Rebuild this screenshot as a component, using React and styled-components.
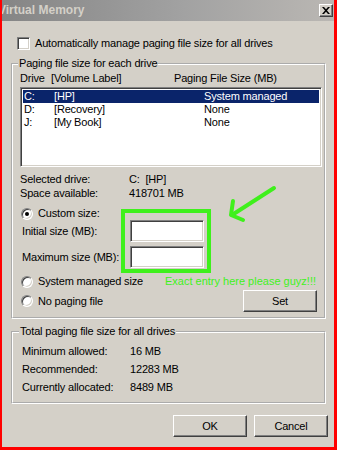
import React from "react";
import styled, { createGlobalStyle } from "styled-components";

const FACE = "#d4d0c8";
const ANNOT = "#3ff01c";

const GlobalStyle = createGlobalStyle`
  html, body {
    margin: 0;
    padding: 0;
    background: #ff0000;
  }
  body {
    font-family: "Liberation Sans", Arial, sans-serif;
    font-size: 11px;
    line-height: 13px;
    letter-spacing: -0.17px;
    color: #000;
  }
`;

const Page = styled.div`
  position: relative;
  width: 337px;
  height: 450px;
  box-sizing: border-box;
  padding: 0 3px 3px 2px;
  background: #ff0000;
  overflow: hidden;
`;

const Window = styled.div`
  height: 100%;
  background: ${FACE};
  display: flex;
  flex-direction: column;
`;

const TitleBar = styled.div`
  height: 21px;
  flex: none;
  display: flex;
  align-items: center;
  justify-content: space-between;
  background: linear-gradient(90deg, #858585 0%, #a2a2a2 55%, #bab7b3 100%);
  overflow: hidden;
`;

const Title = styled.span`
  margin-left: -4px;
  font-size: 12px;
  font-weight: bold;
  letter-spacing: 0;
  color: ${FACE};
  white-space: nowrap;
`;

const CloseButton = styled.div`
  width: 14px;
  height: 13px;
  margin-right: 1px;
  box-sizing: border-box;
  background: ${FACE};
  border: 1px solid;
  border-color: #fff #404040 #404040 #fff;
  box-shadow: inset -1px -1px #808080;
  display: flex;
  align-items: center;
  justify-content: center;
`;

const Body = styled.div`
  flex: 1;
  display: flex;
  flex-direction: column;
  padding: 16px 6px 0 9px;
`;

const CheckRow = styled.label`
  display: flex;
  align-items: center;
  gap: 5px;
  height: 13px;
  padding-left: 6px;
`;

const Sunken = `
  box-sizing: border-box;
  background: #fff;
  border: 1px solid;
  border-color: #808080 #fff #fff #808080;
  box-shadow: inset 1px 1px #404040, inset -1px -1px ${FACE};
`;

const CheckBox = styled.span`
  ${Sunken}
  width: 13px;
  height: 13px;
  flex: none;
`;

const GroupBox = styled.fieldset`
  margin: ${(p) => p.$top}px 2px 0 0;
  padding: 0 2px ${(p) => p.$bottom}px 7px;
  border: 2px groove #fff;
  min-width: 0;
`;

const Legend = styled.legend`
  margin-left: ${(p) => p.$indent}px;
  padding: 0 1px;
  line-height: 13px;
`;

const ListHeader = styled.div`
  display: grid;
  grid-template-columns: 31px 123px auto;
  margin-top: 2px;
  height: 13px;
`;

const DriveList = styled.div`
  ${Sunken}
  margin-top: 2px;
  height: 80px;
  padding: 2px 2px;
`;

const DriveRow = styled.div`
  display: grid;
  grid-template-columns: 30px 150px auto;
  height: 13px;
  padding-left: 1px;
  background: ${(p) => (p.$selected ? "#0a246a" : "transparent")};
  color: ${(p) => (p.$selected ? "#fff" : "#000")};
`;

const InfoGrid = styled.div`
  display: grid;
  grid-template-columns: ${(p) => p.$label}px auto;
  grid-auto-rows: ${(p) => p.$row}px;
  align-items: center;
  margin-top: ${(p) => p.$top}px;
  padding-left: ${(p) => p.$indent}px;
`;

const RadioRow = styled.div`
  display: flex;
  align-items: center;
  gap: 5px;
  height: ${(p) => p.$height || 13}px;
  margin-top: ${(p) => p.$top}px;
  padding-left: 1px;
`;

const Radio = styled.span`
  ${Sunken}
  width: 12px;
  height: 12px;
  flex: none;
  border-radius: 50%;
  position: relative;
  &::after {
    content: "";
    display: ${(p) => (p.$checked ? "block" : "none")};
    position: absolute;
    left: 3px;
    top: 3px;
    width: 4px;
    height: 4px;
    border-radius: 50%;
    background: #000;
  }
`;

const SizeRow = styled.div`
  display: grid;
  grid-template-columns: 108px 74px;
  align-items: center;
  height: 22px;
  margin-top: ${(p) => p.$top}px;
  padding-left: 2px;
`;

const TextBox = styled.div`
  ${Sunken}
  height: 22px;
`;

const Note = styled.span`
  margin-left: auto;
  margin-right: 6px;
  color: ${ANNOT};
  letter-spacing: 0;
  white-space: nowrap;
`;

const Button = styled.div`
  width: 74px;
  height: 22px;
  box-sizing: border-box;
  display: flex;
  align-items: center;
  justify-content: center;
  background: ${FACE};
  border: 1px solid;
  border-color: #fff #404040 #404040 #fff;
  box-shadow: inset -1px -1px #808080;
`;

const SetButton = styled(Button)`
  margin-left: auto;
  margin-right: 5px;
`;

const ButtonBar = styled.div`
  display: flex;
  justify-content: flex-end;
  gap: 7px;
  margin-top: 11px;
`;

const Overlay = styled.svg`
  position: absolute;
  left: 0;
  top: 0;
  pointer-events: none;
`;

const drives = [
  { letter: "C:", label: "[HP]", size: "System managed", selected: true },
  { letter: "D:", label: "[Recovery]", size: "None" },
  { letter: "J:", label: "[My Book]", size: "None" },
];

const totals = [
  ["Minimum allowed:", "16 MB"],
  ["Recommended:", "12283 MB"],
  ["Currently allocated:", "8489 MB"],
];

export default function App() {
  return (
    <>
      <GlobalStyle />
      <Page>
        <Window>
          <TitleBar>
            <Title>Virtual Memory</Title>
            <CloseButton>
              <svg width="8" height="7" viewBox="0 0 8 7">
                <path d="M0 0h2l2 2.3L6 0h2L5 3.5 8 7H6L4 4.7 2 7H0l3-3.5z" fill="#000" />
              </svg>
            </CloseButton>
          </TitleBar>
          <Body>
            <CheckRow>
              <CheckBox />
              <span>Automatically manage paging file size for all drives</span>
            </CheckRow>

            <GroupBox $top={7} $bottom={5}>
              <Legend $indent={-2}>Paging file size for each drive</Legend>
              <ListHeader>
                <span>Drive</span>
                <span>[Volume Label]</span>
                <span>Paging File Size (MB)</span>
              </ListHeader>
              <DriveList>
                {drives.map((d) => (
                  <DriveRow key={d.letter} $selected={d.selected}>
                    <span>{d.letter}</span>
                    <span>{d.label}</span>
                    <span>{d.size}</span>
                  </DriveRow>
                ))}
              </DriveList>
              <InfoGrid $label={109} $row={14} $top={5} $indent={0}>
                <span>Selected drive:</span>
                <span>C:&nbsp; [HP]</span>
                <span>Space available:</span>
                <span>418701 MB</span>
              </InfoGrid>
              <RadioRow $top={7}>
                <Radio $checked />
                <span>Custom size:</span>
              </RadioRow>
              <SizeRow $top={0}>
                <span>Initial size (MB):</span>
                <TextBox />
              </SizeRow>
              <SizeRow $top={4}>
                <span>Maximum size (MB):</span>
                <TextBox />
              </SizeRow>
              <RadioRow $top={7}>
                <Radio />
                <span>System managed size</span>
                <Note>Exact entry here please guyz!!!</Note>
              </RadioRow>
              <RadioRow $top={2} $height={22}>
                <Radio />
                <span>No paging file</span>
                <SetButton>Set</SetButton>
              </RadioRow>
            </GroupBox>

            <GroupBox $top={6} $bottom={6}>
              <Legend $indent={-1}>Total paging file size for all drives</Legend>
              <InfoGrid $label={108} $row={18} $top={4} $indent={2}>
                {totals.map(([k, v]) => (
                  <React.Fragment key={k}>
                    <span>{k}</span>
                    <span>{v}</span>
                  </React.Fragment>
                ))}
              </InfoGrid>
            </GroupBox>

            <ButtonBar>
              <Button>OK</Button>
              <Button>Cancel</Button>
            </ButtonBar>
          </Body>
        </Window>

        <Overlay width="337" height="450">
          <rect x="123" y="211" width="86" height="60" fill="none" stroke={ANNOT} strokeWidth="4" />
          <g stroke={ANNOT} strokeWidth="4" strokeLinecap="round" fill="none">
            <path d="M274 188 L232 215" />
            <path d="M233 201 L231 215 L243 220" strokeLinejoin="round" />
          </g>
        </Overlay>
      </Page>
    </>
  );
}
